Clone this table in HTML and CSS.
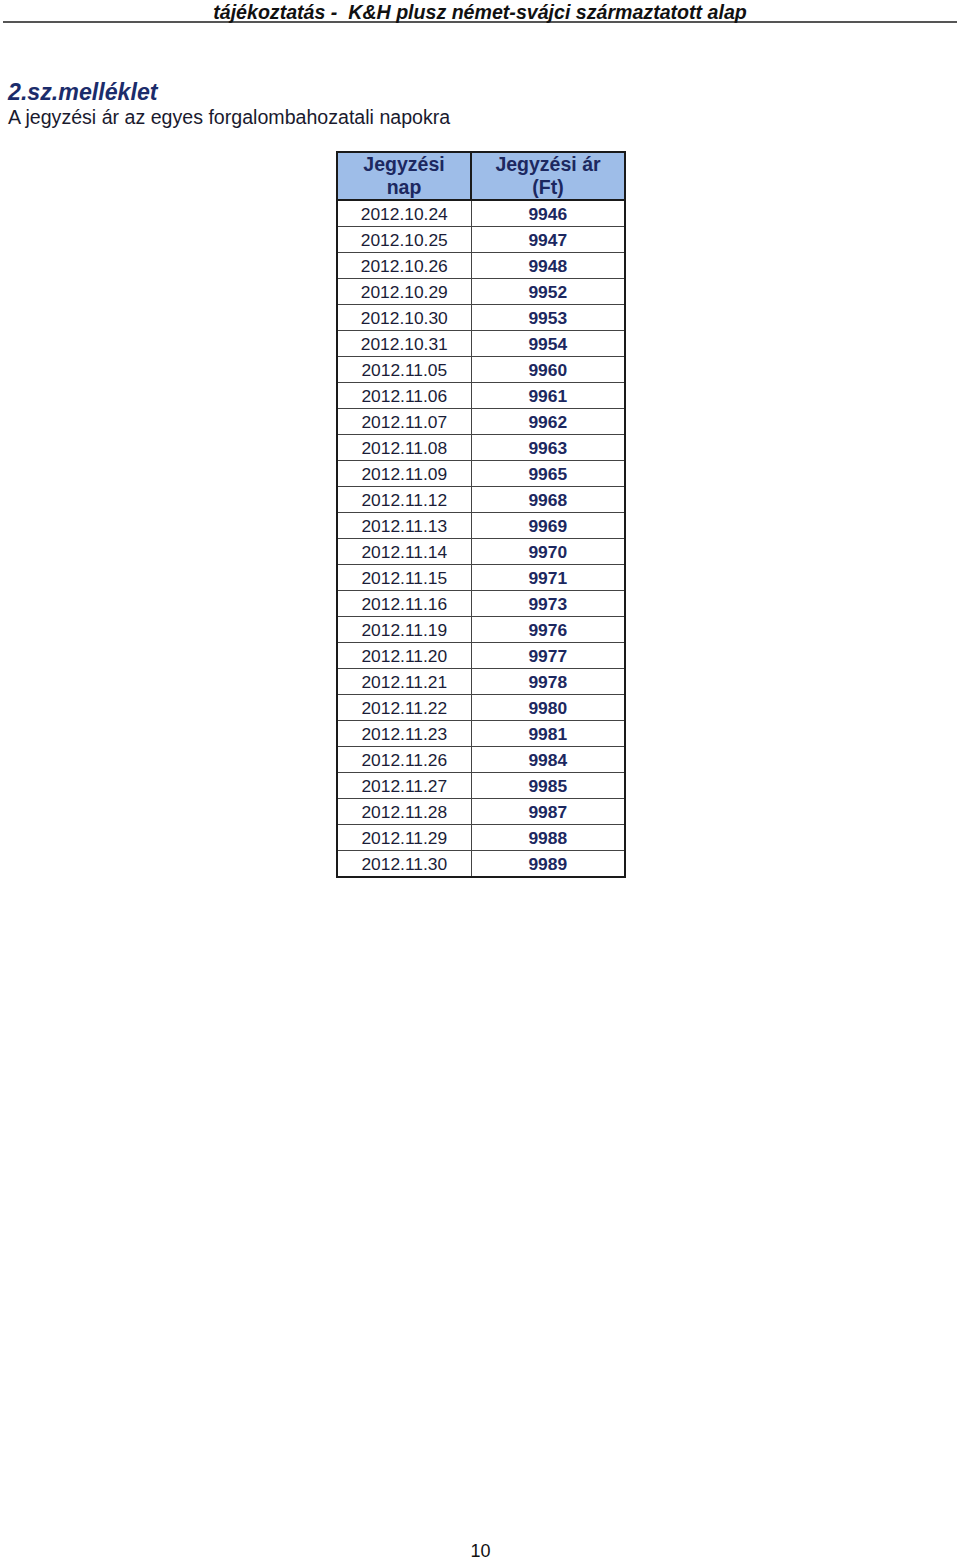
FILE: index.html
```html
<!DOCTYPE html>
<html lang="hu">
<head>
<meta charset="utf-8">
<title>2.sz.melléklet</title>
<link rel="stylesheet" href="styles.css">
</head>
<body>
<div class="page">
  <header class="running-head">tájékoztatás -&nbsp; K&amp;H plusz német-svájci származtatott alap</header>
  <section class="annex">
    <h1 class="annex-title">2.sz.melléklet</h1>
    <p class="annex-sub">A jegyzési ár az egyes forgalombahozatali napokra</p>
    <table class="prices">
      <thead>
        <tr><th class="c-date">Jegyzési<br>nap</th><th class="c-price">Jegyzési ár<br>(Ft)</th></tr>
      </thead>
      <tbody>
        <tr><td>2012.10.24</td><td>9946</td></tr>
        <tr><td>2012.10.25</td><td>9947</td></tr>
        <tr><td>2012.10.26</td><td>9948</td></tr>
        <tr><td>2012.10.29</td><td>9952</td></tr>
        <tr><td>2012.10.30</td><td>9953</td></tr>
        <tr><td>2012.10.31</td><td>9954</td></tr>
        <tr><td>2012.11.05</td><td>9960</td></tr>
        <tr><td>2012.11.06</td><td>9961</td></tr>
        <tr><td>2012.11.07</td><td>9962</td></tr>
        <tr><td>2012.11.08</td><td>9963</td></tr>
        <tr><td>2012.11.09</td><td>9965</td></tr>
        <tr><td>2012.11.12</td><td>9968</td></tr>
        <tr><td>2012.11.13</td><td>9969</td></tr>
        <tr><td>2012.11.14</td><td>9970</td></tr>
        <tr><td>2012.11.15</td><td>9971</td></tr>
        <tr><td>2012.11.16</td><td>9973</td></tr>
        <tr><td>2012.11.19</td><td>9976</td></tr>
        <tr><td>2012.11.20</td><td>9977</td></tr>
        <tr><td>2012.11.21</td><td>9978</td></tr>
        <tr><td>2012.11.22</td><td>9980</td></tr>
        <tr><td>2012.11.23</td><td>9981</td></tr>
        <tr><td>2012.11.26</td><td>9984</td></tr>
        <tr><td>2012.11.27</td><td>9985</td></tr>
        <tr><td>2012.11.28</td><td>9987</td></tr>
        <tr><td>2012.11.29</td><td>9988</td></tr>
        <tr><td>2012.11.30</td><td>9989</td></tr>
      </tbody>
    </table>
  </section>
  <footer class="page-num">10</footer>
</div>
</body>
</html>
```
FILE: styles.css
```css
html, body {
  margin: 0;
  padding: 0;
  background: #ffffff;
}
body {
  font-family: "Liberation Sans", Arial, sans-serif;
  color: #111;
}
.page {
  width: 960px;
  height: 1560px;
  display: flex;
  flex-direction: column;
  box-sizing: border-box;
}
.running-head {
  margin: 0 3px;
  height: 21px;
  border-bottom: 2px solid #555;
  font-size: 19.6px;
  line-height: 24px;
  font-weight: bold;
  font-style: italic;
  text-align: center;
  color: #111;
  white-space: nowrap;
}
.annex {
  padding: 0 0 0 8px;
  flex: 1;
}
.annex-title {
  margin: 56px 0 0 0;
  font-size: 23.2px;
  line-height: 26px;
  font-weight: bold;
  font-style: italic;
  color: #1b2c6b;
}
.annex-sub {
  margin: 0;
  font-size: 19.6px;
  line-height: 24px;
  color: #1a1a2e;
}
.prices {
  margin: 22px 0 0 328px;
  border-collapse: collapse;
  border: 2px solid #1a1a1a;
}
.prices th {
  background: #9ebde8;
  color: #1c2860;
  font-size: 19.5px;
  line-height: 23px;
  font-weight: bold;
  height: 46px;
  padding: 0;
  border: 2px solid #1a1a1a;
  text-align: center;
  vertical-align: middle;
}
.prices .c-date { width: 132px; }
.prices .c-price { width: 152px; }
.prices td {
  height: 25px;
  padding: 0;
  border: 1px solid #444;
  text-align: center;
  vertical-align: middle;
  font-size: 17.4px;
  line-height: 20px;
}
.prices td:first-child {
  color: #1a1d38;
  border-left: 2px solid #1a1a1a;
}
.prices td:last-child {
  color: #1c2860;
  font-weight: bold;
  border-right: 2px solid #1a1a1a;
}
.prices tbody tr:last-child td {
  border-bottom: 2px solid #1a1a1a;
}
.page-num {
  height: 18px;
  text-align: center;
  font-size: 18px;
  line-height: 18px;
  color: #111;
  padding-left: 1px;
}
```
